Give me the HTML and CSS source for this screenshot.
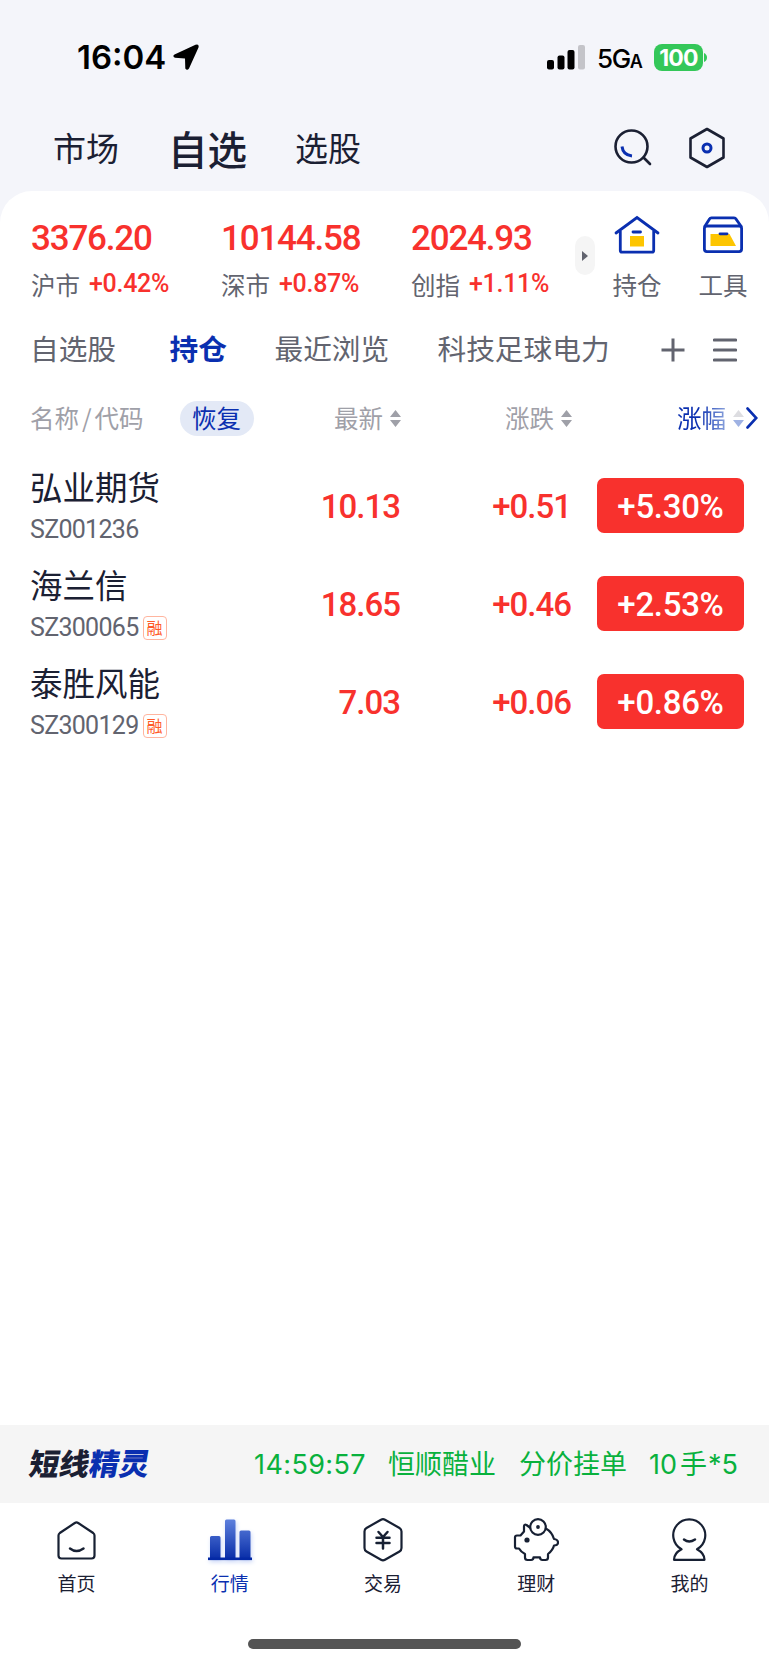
FILE: index.html
```html
<!DOCTYPE html>
<html lang="zh-CN">
<head>
    <meta charset="UTF-8">
    <meta name="viewport" content="width=device-width, initial-scale=1.0">
    <title>自选</title>
    <link rel="stylesheet" href="styles.css">
</head>
<body>
    <div class="status-bar">
        <span class="time">16:04</span>
        <svg class="location" width="26" height="27" viewBox="0 0 26 27"><path d="M1.5 10.500L22.500 .8Q26.400 -.4 25.500 3.500L16 24.500Q14 27 12.300 24.400L12 14.400L2 13.800Q-1 12.400 1.500 10.500Z" fill="#000"/></svg>
        <svg class="signal" width="38" height="25" viewBox="0 0 38 25">
            <rect x="0" y="15" width="7" height="9.5" rx="2"/>
            <rect x="10.500" y="10.500" width="7" height="14" rx="2"/>
            <rect x="20.500" y="5" width="7" height="19.500" rx="2"/>
            <rect x="31" y="0" width="7" height="24.500" rx="2" fill="#c4c4c9"/>
        </svg>
        <span class="network">5G<small>A</small></span>
        <span class="battery">100</span>
        <svg class="battery-tip" width="3" height="9" viewBox="0 0 3 9"><path d="M0 0Q3 1.500 3 4.500T0 9Z" fill="#34c759"/></svg>
    </div>

    <header class="top-nav">
        <a class="top-tab">市场</a>
        <a class="top-tab active">自选</a>
        <a class="top-tab">选股</a>
        <svg class="search" width="40" height="40" viewBox="0 0 40 40" fill="none" stroke-width="2.600" stroke-linecap="round">
            <circle cx="18.500" cy="18.500" r="16" stroke="#1b2033"/>
            <path d="M31 30L37 36" stroke="#1b2033"/>
            <path d="M9 18.500Q10 27 19 28" stroke="#0a2fb0" stroke-linecap="butt" stroke-width="3"/>
        </svg>
        <svg class="settings" width="36" height="42" viewBox="0 0 36 42" fill="none">
            <path d="M18 2L34.500 11.500V30.500L18 40L1.500 30.500V11.500Z" stroke="#1b2033" stroke-width="2.600" stroke-linejoin="round"/>
            <circle cx="18" cy="21" r="4" stroke="#0a2fb0" stroke-width="3"/>
        </svg>
    </header>

    <main class="card">
        <section class="indices">
            <div class="index">
                <strong>3376.20</strong>
                <p>沪市<em>+0.42%</em></p>
            </div>
            <div class="index">
                <strong>10144.58</strong>
                <p>深市<em>+0.87%</em></p>
            </div>
            <div class="index">
                <strong>2024.93</strong>
                <p>创指<em>+1.11%</em></p>
            </div>
            <button class="expand"><svg width="6" height="10" viewBox="0 0 6 10"><path d="M0 0L6 5L0 10Z" fill="#62646f"/></svg></button>
            <a class="tool">
                <svg width="46" height="40" viewBox="0 0 46 40" fill="none">
                    <path d="M2 18L23 2.500L44 18" stroke="#0a2fb0" stroke-width="2.800" stroke-linecap="round"/>
                    <path d="M6.300 16V35.500Q6.300 37.200 8 37.200H38Q39.700 37.200 39.700 35.500V16" stroke="#0a2fb0" stroke-width="2.800"/>
                    <rect x="16" y="21" width="14" height="10.500" fill="#fdc500"/>
                    <path d="M19 17H26.500" stroke="#0a2fb0" stroke-width="2.800" stroke-linecap="round"/>
                </svg>
                <span>持仓</span>
            </a>
            <a class="tool">
                <svg width="46" height="40" viewBox="0 0 46 40" fill="none">
                    <path d="M4.400 12L9.500 4Q10 2.900 11.500 2.900H34Q35.500 2.900 36 4L41.600 12" stroke="#0a2fb0" stroke-width="2.800"/>
                    <rect x="4.400" y="11" width="37.200" height="25.600" rx="2.500" stroke="#0a2fb0" stroke-width="2.800"/>
                    <path d="M10.500 19H29.500L36 31H10.500Z" fill="#fdc500"/>
                    <path d="M20 18.800H27" stroke="#0a2fb0" stroke-width="2.800" stroke-linecap="round"/>
                </svg>
                <span>工具</span>
            </a>
        </section>

        <nav class="groups">
            <a>自选股</a>
            <a class="active">持仓</a>
            <a>最近浏览</a>
            <a>科技足球电力</a>
            <svg class="add" width="24" height="24" viewBox="0 0 24 24"><path d="M12 .5V23.500M.5 12H23.500" stroke="#62646f" stroke-width="3"/></svg>
            <svg class="menu" width="24" height="24" viewBox="0 0 24 24"><path d="M1.300 2H22.700M1.300 12H22.700M1.300 22H22.700" stroke="#62646f" stroke-width="3" stroke-linecap="round"/></svg>
        </nav>

        <div class="row table-head">
            <div class="name-head">名称<i>/</i>代码<button class="restore">恢复</button></div>
            <div class="sortable">最新<svg width="11" height="17" viewBox="0 0 11 17" fill="#9fa0a8"><path d="M5.500 0L11 7H0ZM0 10H11L5.500 17Z"/></svg></div>
            <div class="sortable">涨跌<svg width="11" height="17" viewBox="0 0 11 17" fill="#9fa0a8"><path d="M5.500 0L11 7H0ZM0 10H11L5.500 17Z"/></svg></div>
            <div class="sortable sorted"><span>涨幅</span><svg width="11" height="17" viewBox="0 0 11 17"><path d="M5.500 0L11 7H0Z" fill="#dddde1"/><path d="M0 10H11L5.500 17Z" fill="#9fb2e3"/></svg><svg class="more" width="12" height="22" viewBox="0 0 12 22"><path d="M1.500 1.500L10.300 11L1.500 20.500" fill="none" stroke="#0a2fb0" stroke-width="2.600" stroke-linecap="round"/></svg></div>
        </div>

        <div class="row stock">
            <div class="name"><h2>弘业期货</h2><p>SZ001236</p></div>
            <span class="price">10.13</span>
            <span class="change">+0.51</span>
            <span class="percent">+5.30%</span>
        </div>
        <div class="row stock">
            <div class="name"><h2>海兰信</h2><p>SZ300065<i>融</i></p></div>
            <span class="price">18.65</span>
            <span class="change">+0.46</span>
            <span class="percent">+2.53%</span>
        </div>
        <div class="row stock">
            <div class="name"><h2>泰胜风能</h2><p>SZ300129<i>融</i></p></div>
            <span class="price">7.03</span>
            <span class="change">+0.06</span>
            <span class="percent">+0.86%</span>
        </div>
    </main>

    <div class="ticker">
        <b>短线<span>精灵</span></b>
        <span class="ticker-time">14:59:57</span>
        <span class="ticker-name">恒顺醋业</span>
        <span class="ticker-type">分价挂单</span>
        <span class="ticker-lot">10<u>手</u>*5</span>
    </div>

    <footer class="tab-bar">
        <a>
            <svg width="46" height="46" viewBox="0 0 46 46" fill="none" stroke="#172033" stroke-width="2.200" stroke-linecap="round">
                <path d="M4.500 17.500Q4.500 16 5.800 15L20.800 5Q22.500 3.900 24.200 5L39.200 15Q40.500 16 40.500 17.500V37.500Q40.500 40.500 37.500 40.500H7.500Q4.500 40.500 4.500 37.500Z"/>
                <path d="M16 30.500Q22.500 35.500 29.500 30.500" stroke-width="2.500"/>
            </svg>
            <span>首页</span>
        </a>
        <a class="active">
            <svg class="bars" width="46" height="46" viewBox="0 0 46 46">
                <defs><linearGradient id="bar" x1="0" y1="3" x2="0" y2="43" gradientUnits="userSpaceOnUse"><stop offset="0" stop-color="#5a7ddb"/><stop offset="1" stop-color="#0429a5"/></linearGradient></defs>
                <path d="M3 41V19.500Q3 18 4.500 18H12Q13.500 18 13.500 19.500V41ZM18 41V3Q18 1.500 19.500 1.500H27Q28.500 1.500 28.500 3V41ZM32.500 41V14Q32.500 12.500 34 12.500H42Q43.500 12.500 43.500 14V41Z" fill="url(#bar)"/>
                <rect x="1" y="39.500" width="44" height="2.600" fill="#0429a5"/>
            </svg>
            <span>行情</span>
        </a>
        <a>
            <svg width="46" height="46" viewBox="0 0 46 46" fill="none" stroke="#172033" stroke-width="2.200" stroke-linecap="round">
                <path d="M21 1.700Q23 .6 25 1.700L39.500 10Q41.500 11.200 41.500 13.500V30Q41.500 32.300 39.500 33.500L25 41.800Q23 42.900 21 41.800L6.500 33.500Q4.500 32.300 4.500 30V13.500Q4.500 11.200 6.500 10Z"/>
                <path d="M18.500 14L23 19L27.500 14M16.500 19.800H29.500M16.500 25H29.500M23 19V30.500" stroke-width="2.500"/>
            </svg>
            <span>交易</span>
        </a>
        <a>
            <svg width="46" height="46" viewBox="0 0 46 46" fill="none" stroke="#172033" stroke-width="2.200" stroke-linejoin="round">
                <circle cx="25" cy="9" r="7.800"/>
                <circle cx="25" cy="9" r="1.900" fill="#172033" stroke="none"/>
                <circle cx="14" cy="22" r="2.600" fill="#172033" stroke="none"/>
                <path d="M17.500 10L13.500 7Q11 6 11 8.500V13.500L7.500 17.500H4Q2 17.500 2 19.500V28.500Q2 30.500 4 30.500H6Q8 34 12 36V39.500Q12 42 14.500 42H18Q20.500 42 20.500 39.300H27Q27 42 29.500 42H32.500Q35 42 35 39.500V36Q40 32 41 27.500Q45 27.500 45 24.500T41 21Q39 14 32.800 10.500"/>
            </svg>
            <span>理财</span>
        </a>
        <a>
            <svg width="46" height="46" viewBox="0 0 46 46" fill="none" stroke="#172033" stroke-width="2.200" stroke-linecap="round" stroke-linejoin="round">
                <path d="M15.500 30.500A16 16 0 1 1 31 30.500Q38.500 34.500 38.500 41H8Q8 34.500 15.500 30.500" transform="translate(0 .8)"/>
                <path d="M18 21.500Q23 25.500 29 21.500" stroke-width="2.500"/>
            </svg>
            <span>我的</span>
        </a>
    </footer>
    <div class="home-indicator"></div>
</body>
</html>
```
FILE: styles.css
```css
* {
    box-sizing: border-box;
}

body {
    margin: 0;
    width: 769px;
    height: 1665px;
    display: flex;
    flex-direction: column;
    overflow: hidden;
    background: #f4f5fa;
    color: #1b2033;
    font-family: "Noto Sans CJK SC", sans-serif;
    font-size: 24.5px;
    line-height: 1;
}

svg {
    flex: none;
    display: block;
}

h2, p {
    margin: 0;
    font-weight: 400;
}

em, i, u {
    font-style: normal;
    text-decoration: none;
}

button {
    border: 0;
    padding: 0;
    font: inherit;
}

a, span, strong {
    white-space: nowrap;
}

.status-bar {
    display: flex;
    align-items: center;
    height: 115px;
    padding-left: 77px;
    color: #000;
    font-family: Inter, sans-serif;
}

.time {
    width: 96px;
    font-size: 33px;
    font-weight: 600;
}

.signal {
    margin-left: 348px;
}

.network {
    width: 57px;
    margin-left: 12px;
    padding-top: 2px;
    font-size: 26px;
    font-weight: 500;
    letter-spacing: -1.4px;
}

    .network small {
        font-size: 18px;
        font-weight: 600;
    }

.battery {
    width: 49px;
    height: 27px;
    border-radius: 8px;
    background: #34c759;
    color: #fff;
    font-size: 23px;
    font-weight: 700;
    line-height: 28px;
    text-align: center;
    letter-spacing: -0.8px;
}

.battery-tip {
    margin-left: 1px;
}

.top-nav {
    display: flex;
    align-items: center;
    height: 76px;
    padding: 0 0 10px 53px;
}

.top-tab {
    flex: none;
    width: 115px;
    margin-top: -1px;
    font-size: 33px;
}

    .top-tab.active {
        width: 127px;
        font-size: 39.500px;
        font-weight: 500;
    }

.search {
    margin-left: 203px;
}

.settings {
    margin-left: 36px;
}

.card {
    flex: 1;
    border-radius: 32px 32px 0 0;
    background: #fff;
}

.indices {
    display: flex;
    height: 121px;
    padding-left: 31px;
}

.index {
    flex: none;
    width: 190px;
    padding-top: 30px;
}

    .index strong {
        display: block;
        color: #f8312d;
        font: 500 35px/35px Roboto, sans-serif;
        letter-spacing: -1.2px;
    }

    .index p {
        display: flex;
        align-items: center;
        height: 30px;
        margin-top: 14px;
        color: #62646f;
    }

    .index em {
        margin: -3px 0 0 9px;
        color: #f8312d;
        font: 500 25px/30px Roboto, sans-serif;
        letter-spacing: -0.3px;
        white-space: nowrap;
    }

.expand {
    display: flex;
    flex: none;
    align-items: center;
    justify-content: center;
    width: 20px;
    height: 39px;
    margin: 45px 17px 0 -26px;
    border-radius: 10px;
    background: #f5f5f5;
}

.tool {
    display: flex;
    flex: none;
    flex-direction: column;
    align-items: center;
    width: 50px;
    margin: 24px 36px 0 0;
    color: #62646f;
}

    .tool:last-child {
        margin-right: 0;
    }

    .tool span {
        margin-top: 18px;
    }

.groups {
    display: flex;
    align-items: center;
    height: 75px;
    padding-left: 30px;
    color: #62646f;
    font-size: 28.700px;
}

    .groups a {
        width: 139.500px;
        margin-top: -2px;
    }

    .groups .active {
        width: 105px;
        color: #0a2fb0;
        font-weight: 700;
    }

    .groups a:nth-child(3) {
        width: 163px;
    }

    .groups a:nth-child(4) {
        width: 223px;
    }

.menu {
    margin-left: 28px;
}

.row {
    display: grid;
    align-items: center;
    padding-left: 30px;
}

.table-head {
    height: 62px;
    margin-bottom: 8px;
    grid-template-columns: 304px 171px 172px 100px;
    color: #9fa0a8;
}

.name-head,
.sortable {
    display: flex;
    align-items: center;
    white-space: nowrap;
}

.name-head i {
    margin: 0 3px;
}

.restore {
    width: 74px;
    height: 35px;
    margin-left: 36px;
    border-radius: 18px;
    background: #e3e9f6;
    color: #0a2fb0;
}

.sortable svg {
    margin-left: 7px;
}

.sorted span {
    background: linear-gradient(90deg, #0a2fb0 45%, #8ca4dd);
    -webkit-background-clip: text;
    background-clip: text;
    color: transparent;
}

.sortable .more {
    margin-left: 2px;
}

.stock {
    height: 97.700px;
    grid-template-columns: 200px 171px 171px 173px;
    color: #f8312d;
    font: 500 33px/40px Roboto, sans-serif;
    letter-spacing: -1px;
}

.name {
    color: #62646f;
    white-space: nowrap;
}

    .name h2 {
        color: #1b2033;
        font: 400 32.500px/44px "Noto Sans CJK SC", sans-serif;
        letter-spacing: 0;
    }

    .name p {
        display: flex;
        align-items: center;
        height: 34px;
        margin-top: 5px;
        font-size: 25px;
        font-weight: 400;
        letter-spacing: -0.7px;
    }

    .name i {
        width: 24px;
        height: 24px;
        margin-left: 4px;
        border: 1.500px solid #ffb59f;
        border-radius: 4px;
        color: #ff5a28;
        font: 400 16px/20px "Noto Sans CJK SC", sans-serif;
        letter-spacing: 0;
        text-align: center;
    }

.price,
.change {
    padding: 3px 1px 0 0;
    text-align: right;
}

.percent {
    width: 147px;
    height: 55px;
    margin-left: 25px;
    border-radius: 7px;
    background: #f8312d;
    color: #fff;
    line-height: 58px;
    letter-spacing: -0.3px;
    text-align: center;
}

.ticker {
    display: flex;
    align-items: center;
    height: 78px;
    padding-left: 30px;
    background: #f5f5f5;
    color: #09b13d;
    font: 400 27px/1 Inter, "Noto Sans CJK SC", sans-serif;
}

    .ticker b {
        width: 224px;
        margin-top: -4px;
        color: #1b2033;
        font: 900 30px/1 "Noto Sans CJK SC", sans-serif;
        transform: skewX(-10deg);
    }

    .ticker b span {
        color: #0a2fb0;
    }

.ticker-time {
    width: 134px;
    letter-spacing: 0.4px;
}

.ticker-name {
    width: 131px;
}

.ticker-type {
    width: 130px;
}

.ticker-lot u {
    margin: 0 1px 0 3px;
}

.tab-bar {
    display: flex;
    height: 136px;
    padding: 15px 3px 0 0;
    background: #fff;
}

    .tab-bar a {
        display: flex;
        flex: 1;
        flex-direction: column;
        align-items: center;
        font-size: 19px;
    }

    .tab-bar .active {
        color: #0a2fb0;
    }

    .tab-bar .bars {
        filter: drop-shadow(1px 2px 2px #c9d6f8);
    }

    .tab-bar span {
        margin-top: 9px;
    }

.home-indicator {
    height: 26px;
    background: #fff;
}

    .home-indicator::before {
        content: "";
        display: block;
        width: 273px;
        height: 10px;
        margin: 0 auto;
        border-radius: 5px;
        background: #545454;
    }
```
